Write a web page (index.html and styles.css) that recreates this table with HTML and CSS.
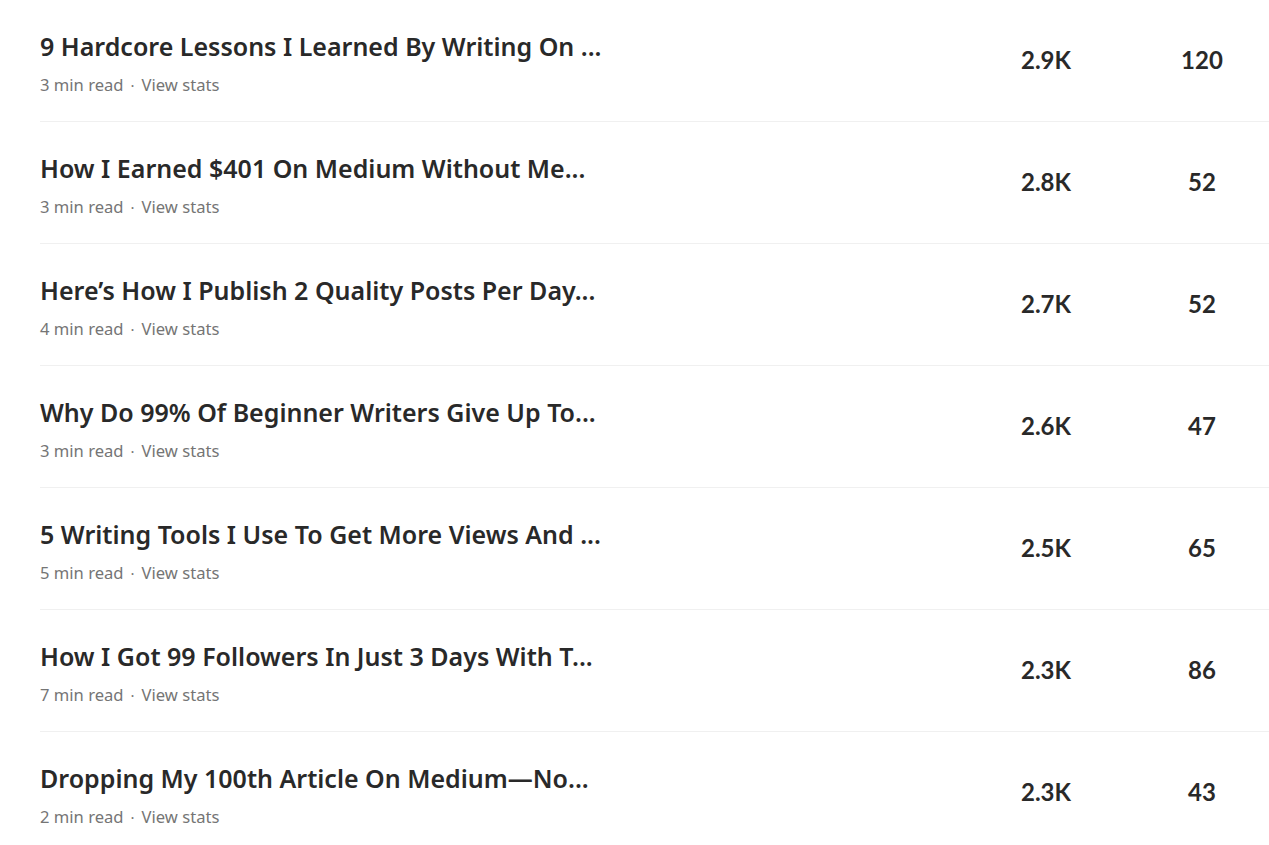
FILE: index.html
```html
<!DOCTYPE html>
<html lang="en">
<head>
<meta charset="utf-8">
<title>Stories</title>
<link rel="stylesheet" href="styles.css">
</head>
<body>
<div class="list">
  <div class="row">
    <div class="info">
      <div class="title">9 Hardcore Lessons I Learned By Writing On ...</div>
      <div class="meta"><span>3 min read</span><span class="dot">·</span><span>View stats</span></div>
    </div>
    <div class="stat">2.9K</div>
    <div class="stat">120</div>
  </div>
  <div class="row">
    <div class="info">
      <div class="title">How I Earned $401 On Medium Without Me...</div>
      <div class="meta"><span>3 min read</span><span class="dot">·</span><span>View stats</span></div>
    </div>
    <div class="stat">2.8K</div>
    <div class="stat">52</div>
  </div>
  <div class="row">
    <div class="info">
      <div class="title">Here’s How I Publish 2 Quality Posts Per Day...</div>
      <div class="meta"><span>4 min read</span><span class="dot">·</span><span>View stats</span></div>
    </div>
    <div class="stat">2.7K</div>
    <div class="stat">52</div>
  </div>
  <div class="row">
    <div class="info">
      <div class="title">Why Do 99% Of Beginner Writers Give Up To...</div>
      <div class="meta"><span>3 min read</span><span class="dot">·</span><span>View stats</span></div>
    </div>
    <div class="stat">2.6K</div>
    <div class="stat">47</div>
  </div>
  <div class="row">
    <div class="info">
      <div class="title">5 Writing Tools I Use To Get More Views And ...</div>
      <div class="meta"><span>5 min read</span><span class="dot">·</span><span>View stats</span></div>
    </div>
    <div class="stat">2.5K</div>
    <div class="stat">65</div>
  </div>
  <div class="row">
    <div class="info">
      <div class="title">How I Got 99 Followers In Just 3 Days With T...</div>
      <div class="meta"><span>7 min read</span><span class="dot">·</span><span>View stats</span></div>
    </div>
    <div class="stat">2.3K</div>
    <div class="stat">86</div>
  </div>
  <div class="row">
    <div class="info">
      <div class="title">Dropping My 100th Article On Medium—No...</div>
      <div class="meta"><span>2 min read</span><span class="dot">·</span><span>View stats</span></div>
    </div>
    <div class="stat">2.3K</div>
    <div class="stat">43</div>
  </div>
</div>
</body>
</html>
```
FILE: styles.css
```css
html, body {
  margin: 0;
  padding: 0;
  background: #ffffff;
  overflow: hidden;
}
body {
  font-family: "Noto Sans", "Lato", sans-serif;
  color: #292929;
}
.list {
  margin-left: 40px;
  width: 1240px;
}
.row {
  height: 121px;
  border-bottom: 1px solid #f0f0f0;
  display: grid;
  grid-template-columns: 1fr 156px 156px;
  align-items: start;
}
.info {
  padding-top: 30px;
}
.title {
  font-size: 25px;
  font-weight: 600;
  line-height: 32px;
  color: #292929;
  white-space: nowrap;
}
.meta {
  margin-top: 13px;
  font-size: 16.6px;
  line-height: 20px;
  color: #757575;
  display: flex;
  align-items: center;
}
.dot {
  margin: 0 7px;
  font-size: 15px;
}
.stat {
  padding-top: 45px;
  text-align: center;
  font-family: "Lato", "Noto Sans", sans-serif;
  font-size: 24px;
  font-weight: 700;
  line-height: 30px;
  color: #292929;
}
```
